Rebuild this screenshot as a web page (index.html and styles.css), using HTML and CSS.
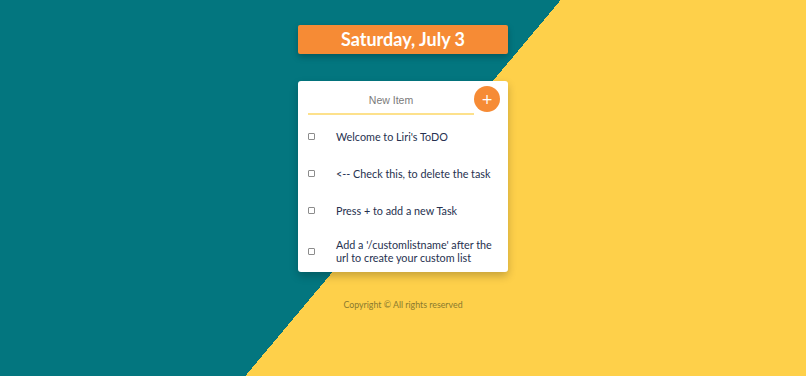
FILE: index.html
```html
<!DOCTYPE html>
<html lang="en">
<head>
<meta charset="utf-8">
<title>ToDo List</title>
<link rel="stylesheet" href="styles.css">
</head>
<body>
<main class="container">
  <div class="date"><h1>Saturday, July 3</h1></div>
  <div class="card">
    <form class="new-item">
      <input type="text" class="new-input" placeholder="New Item" autocomplete="off">
      <button type="button" class="add-btn">+</button>
    </form>
    <div class="item"><input type="checkbox" class="check"><p>Welcome to Liri's ToDO</p></div>
    <div class="item"><input type="checkbox" class="check"><p>&lt;-- Check this, to delete the task</p></div>
    <div class="item"><input type="checkbox" class="check"><p>Press + to add a new Task</p></div>
    <div class="item item-last"><input type="checkbox" class="check"><p>Add a '/customlistname' after the url to create your custom list</p></div>
  </div>
  <footer class="footer">Copyright © All rights reserved</footer>
</main>
</body>
</html>
```

FILE: styles.css
```css
html, body {
  margin: 0;
  padding: 0;
}
body {
  height: 376px;
  overflow: hidden;
  background: linear-gradient(130deg, #03767f 50%, #fed04a 50%);
  font-family: Lato, "Open Sans", sans-serif;
}
.container {
  width: 210px;
  margin: 0 auto;
  padding-top: 25px;
}
.date {
  background: #f68b35;
  border-radius: 2px;
  height: 29px;
  box-shadow: 0 3px 6px rgba(0, 0, 0, 0.25);
}
.date h1 {
  margin: 0;
  color: #fff;
  font-size: 18px;
  font-weight: 700;
  line-height: 29px;
  text-align: center;
}
.card {
  margin-top: 27px;
  background: #fff;
  border-radius: 3px;
  box-shadow: 0 4px 8px rgba(0, 0, 0, 0.22);
}
.new-item {
  display: flex;
  align-items: flex-start;
  height: 37px;
  padding: 5px 8px 0 10px;
  box-sizing: border-box;
  margin: 0;
}
.new-input {
  width: 166px;
  height: 29px;
  box-sizing: border-box;
  border: none;
  border-bottom: 2px solid #fde18c;
  outline: none;
  padding: 0;
  text-align: center;
  font-family: "Liberation Sans", Arial, sans-serif;
  font-size: 10.5px;
  color: #333;
  background: transparent;
}
.new-input::placeholder {
  color: #7a7a7a;
}
.add-btn {
  width: 26px;
  height: 26px;
  border-radius: 50%;
  border: none;
  padding: 0;
  background: #f68b35;
  color: #fff;
  font-family: "DejaVu Sans", sans-serif;
  font-size: 14px;
  line-height: 26px;
  font-weight: 400;
}
.item {
  display: flex;
  align-items: center;
  min-height: 37px;
  box-sizing: border-box;
  padding: 9px 10px;
}
.item-last {
  padding-bottom: 8px;
}
.check {
  -webkit-appearance: none;
  appearance: none;
  width: 7px;
  height: 7px;
  box-sizing: border-box;
  border: 1px solid #8c8c8c;
  border-radius: 1px;
  background: #fff;
  margin: 0 21px 0 0;
  flex: none;
}
.item p {
  margin: 0;
  font-size: 10.8px;
  line-height: 13px;
  color: #26314f;
}
.footer {
  margin-top: 27px;
  text-align: center;
  font-size: 8.8px;
  color: #8a7a2e;
}
```
